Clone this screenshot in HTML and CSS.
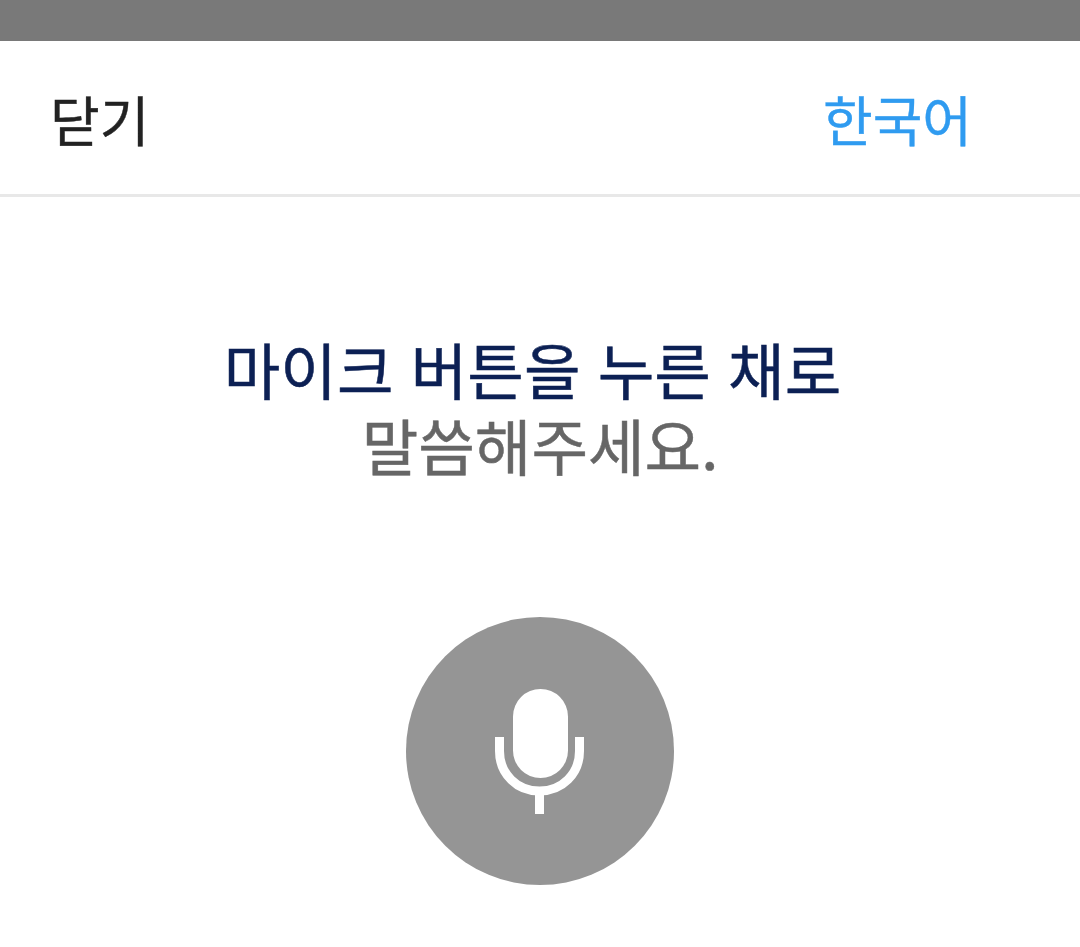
FILE: index.html
```html
<!DOCTYPE html>
<html lang="ko">
<head>
<meta charset="utf-8">
<title>음성 검색</title>
<link rel="stylesheet" href="styles.css">
</head>
<body>
<div class="status"></div>
<header class="top">
  <span class="close">닫기</span>
  <span class="lang">한국어</span>
</header>
<main class="main">
  <p class="line1">마이크 버튼을 누른 채로</p>
  <p class="line2">말씀해주세요.</p>
  <div class="mic">
    <svg class="mic-icon" width="90" height="125" viewBox="0 0 90 125">
      <rect x="18" y="0" width="55" height="89" rx="27.5" fill="#fff"/>
      <path d="M4.5 48V62C4.5 85 22 102 44.5 102C67 102 84.5 85 84.5 62V48" fill="none" stroke="#fff" stroke-width="9"/>
      <rect x="40" y="104" width="9" height="21" fill="#fff"/>
    </svg>
  </div>
</main>
</body>
</html>
```
FILE: styles.css
```css
html, body { margin: 0; padding: 0; background: #fff; }
body { width: 1080px; height: 947px; overflow: hidden; font-family: "Noto Sans CJK KR", "Noto Sans", sans-serif; }
.status { height: 41px; background: #797979; }
.top { display: flex; justify-content: space-between; align-items: center; padding: 2px 108px 0 50px; box-sizing: border-box; border-bottom: 3px solid #e8e8e8; height: 156px; }
.close { font-size: 54px; color: #222; line-height: 1; -webkit-text-stroke: 0.4px #222; }
.lang { font-size: 54px; color: #2f9bf0; line-height: 1; -webkit-text-stroke: 0.4px #2f9bf0; }
.main { display: flex; flex-direction: column; align-items: center; padding-top: 134px; }
.main p { margin: 0; font-size: 61.5px; line-height: 76px; }
.line1 { color: #0c2054; padding-right: 15px; -webkit-text-stroke: 0.5px #0c2054; }
.line2 { color: #666; -webkit-text-stroke: 0.5px #666; }
.mic { margin-top: 134px; width: 268px; height: 268px; border-radius: 50%; background: #959595; display: flex; align-items: center; justify-content: center; }
```
